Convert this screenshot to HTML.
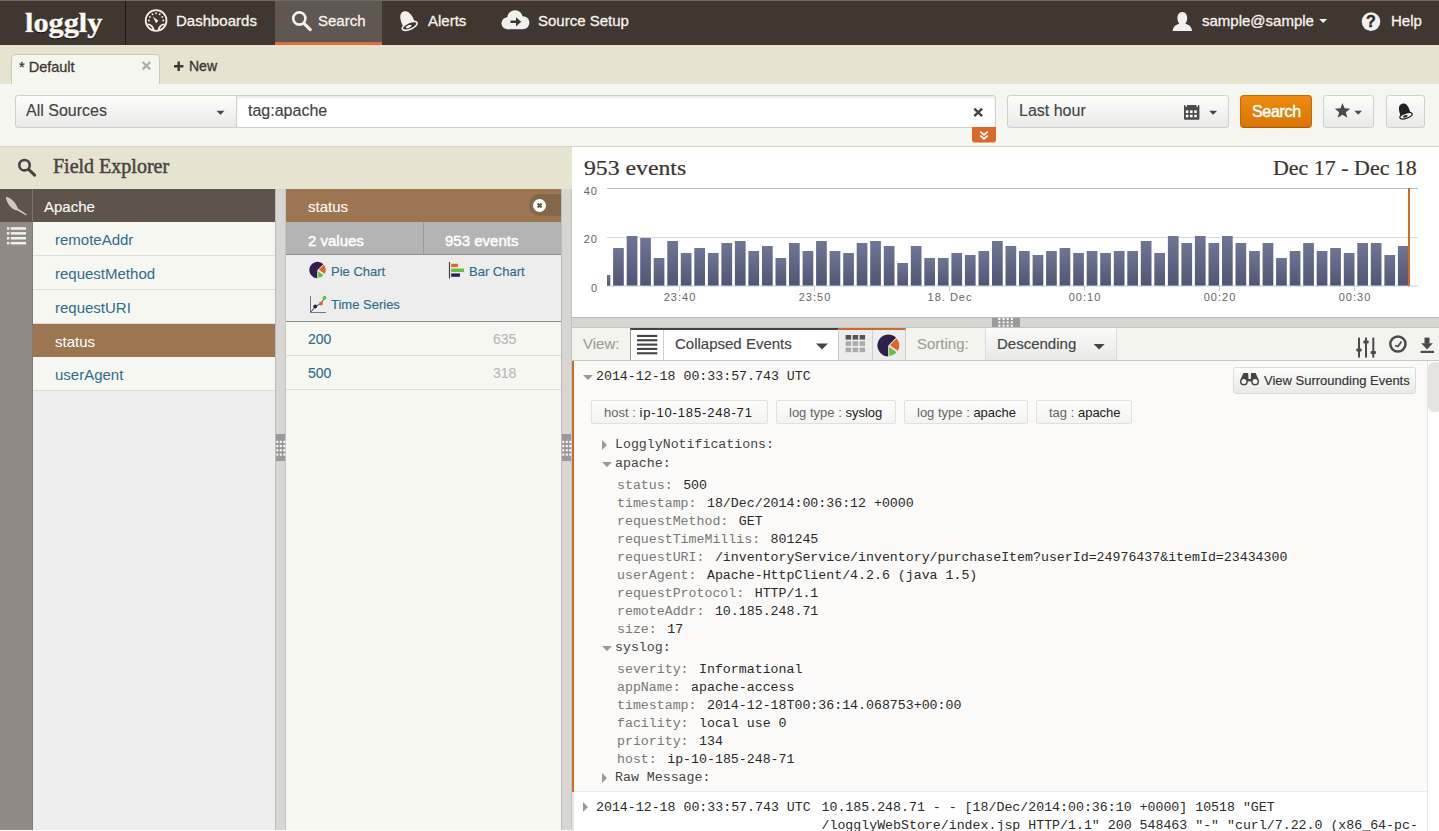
<!DOCTYPE html>
<html><head><meta charset="utf-8">
<style>
*{box-sizing:border-box;margin:0;padding:0}
html,body{width:1439px;height:831px;overflow:hidden;background:#fbfaf8}
body{font-family:"Liberation Sans",sans-serif;position:relative}
.a{position:absolute}
.t{position:absolute;white-space:pre;line-height:1;-webkit-text-stroke-width:0.15px}
svg{position:absolute;overflow:visible}
/* nav */
#nav{left:0;top:0;width:1439px;height:45px;background:#413731;border-top:1px solid #6f6a66}
.nt{color:#f7f3ec;font-size:15px;top:13px;-webkit-text-stroke:0.3px #f7f3ec}
/* tabbar */
#tabbar{left:0;top:45px;width:1439px;height:39px;background:#e6e4d1}
#tab{left:11px;top:54px;width:149px;height:31px;background:#f6f6f1;border:1px solid #cbc9b8;border-bottom:none;border-radius:5px 5px 0 0}
/* search row */
#srow{left:0;top:84px;width:1439px;height:63px;background:#f6f6f1;border-bottom:1px solid #d6d4c9}
.btn{position:absolute;border:1px solid #d0d0cc;border-radius:3px;background:linear-gradient(#fdfdfc,#e9e9e7)}
/* field explorer */
#fehead{left:0;top:147px;width:572px;height:42px;background:#e6e4d1}
#strip{left:0;top:189px;width:33px;height:642px;background:#8f8a85;border-right:1px solid #7f7a75}
#striptop{left:0;top:189px;width:33px;height:33px;background:#5d544e;border-right:1px solid #7a716b}
#col1{left:33px;top:189px;width:242px;height:642px;background:#eeeeee}
.hdr{position:absolute;height:33px;color:#fbf8f2;font-size:15px;-webkit-text-stroke:0.25px #fbf8f2}
.frow{position:absolute;left:0;width:242px;height:34px;background:#f7f7f2;border-bottom:1px solid #dfddd5;font-size:15px;color:#2e6c8c}
.frow span{position:absolute;left:22px;top:10px;line-height:1}
.split{position:absolute;top:189px;width:11px;height:642px;background:#d8d6d2;border-left:1px solid #bdbbb7;border-right:1px solid #c6c4c0}
.handle{position:absolute;left:0;width:9px;height:27px;background:#9a9a9a}
.dot{position:absolute;width:2px;height:2px;background:#fff}
#col2{left:286px;top:189px;width:275px;height:642px;background:#f7f7f2}
.vrow{position:absolute;left:0;width:275px;height:34px;border-bottom:1px solid #dfddd5}
.lnk{color:#2e6c8c;font-size:13px}
/* right */
#chart{left:572px;top:147px;width:867px;height:171px;background:#fff}
#hsplit{left:572px;top:317px;width:867px;height:11px;background:#d8d6d2;border-top:1px solid #bdbbb7;border-bottom:1px solid #c6c4c0}
#tool{left:572px;top:328px;width:867px;height:33px;background:#f4f4ef;border-bottom:1px solid #c9c7c0}
#events{left:572px;top:361px;width:867px;height:470px;background:#fbfaf8}
.mono{font-family:"Liberation Mono",monospace;font-size:13.25px;line-height:1;white-space:pre;position:absolute}
.k{color:#777}
.v{color:#2a2a2a}
.tag{position:absolute;top:400px;height:24px;border:1px solid #e2e1dc;border-radius:2px;background:linear-gradient(#fdfdfc,#f3f3f1);font-size:13px;color:#666;white-space:pre}
.tag span{position:absolute;top:5px;left:12px;line-height:1}
.tag b{font-weight:normal;color:#222}
</style></head><body>

<!-- NAV -->
<div id="nav" class="a"></div>
<div class="t" style="left:25px;top:9px;font-family:'Liberation Serif',serif;font-weight:bold;font-size:28px;color:#fbf8f2;text-shadow:0 1px 1px #000;transform:scaleX(1.08);transform-origin:0 0;-webkit-text-stroke:0.4px #fbf8f2">loggly</div>
<div class="a" style="left:125px;top:1px;width:1px;height:44px;background:#1d1714"></div>
<div class="a" style="left:275px;top:1px;width:107px;height:44px;background:#5f5751;border-bottom:3px solid #d9703f"></div>
<div class="t nt" style="left:176px">Dashboards</div>
<div class="t nt" style="left:318px">Search</div>
<div class="t nt" style="left:428px">Alerts</div>
<div class="t nt" style="left:538px">Source Setup</div>
<div class="t nt" style="left:1202px">sample@sample</div>
<div class="t nt" style="left:1391px">Help</div>

<!-- TABBAR -->
<div id="tabbar" class="a"></div>
<div id="tab" class="a"></div>
<div class="t" style="left:19px;top:60px;font-size:14.5px;color:#3d3632;-webkit-text-stroke:0.3px #3d3632">* Default</div>
<svg style="left:0;top:0" width="200" height="100"><path d="M142.6 62 L150.2 69.4 M150.2 62 L142.6 69.4" stroke="#adadad" stroke-width="2.3"/><path d="M178.7 61.5 V71 M174 66.2 H183.4" stroke="#3d3632" stroke-width="2.4"/></svg>

<div class="t" style="left:189px;top:59px;font-size:14px;color:#3d3632;-webkit-text-stroke:0.35px #3d3632">New</div>

<!-- SEARCH ROW -->
<div id="srow" class="a"></div>
<div class="btn" style="left:15px;top:95px;width:222px;height:33px;border-radius:3px 0 0 3px"></div>
<div class="t" style="left:26px;top:103px;font-size:16px;color:#444">All Sources</div>
<div class="a" style="left:236px;top:95px;width:760px;height:33px;background:#fff;border:1px solid #cfcfcb;box-shadow:inset 0 2px 2px rgba(0,0,0,.08);border-radius:0 3px 3px 0"></div>
<div class="t" style="left:248px;top:103px;font-size:16px;color:#444">tag:apache</div>
<div class="btn" style="left:1007px;top:95px;width:222px;height:33px"></div>
<div class="t" style="left:1019px;top:103px;font-size:16px;color:#444">Last hour</div>
<div class="a" style="left:1240px;top:95px;width:72px;height:33px;border-radius:4px;background:linear-gradient(#ee8a0c,#db7504);border:1px solid #c26a06;border-bottom-color:#a85a04"></div>
<div class="t" style="left:1252px;top:104px;font-size:16px;color:#fff;-webkit-text-stroke:0.5px #fff;letter-spacing:-0.3px">Search</div>
<div class="btn" style="left:1323px;top:95px;width:51px;height:33px"></div>
<div class="btn" style="left:1386px;top:95px;width:39px;height:33px"></div>


<!-- FIELD EXPLORER -->
<div id="fehead" class="a"></div>
<div class="t" style="left:53px;top:156px;font-family:'Liberation Serif',serif;font-size:20px;color:#4a4541;-webkit-text-stroke:0.5px #4a4541">Field Explorer</div>
<div id="strip" class="a"></div>
<div id="striptop" class="a"></div>
<div id="col1" class="a">
  <div class="hdr" style="left:0;top:0;width:242px;background:#5d544e"><span class="t" style="left:11px;top:10px">Apache</span></div>
  <div class="frow" style="top:33px"><span>remoteAddr</span></div>
  <div class="frow" style="top:67px"><span>requestMethod</span></div>
  <div class="frow" style="top:101px"><span>requestURI</span></div>
  <div class="frow" style="top:135px;height:33px;background:#9b7650;color:#fff;border-bottom:none"><span>status</span></div>
  <div class="frow" style="top:168px"><span>userAgent</span></div>
</div>
<div class="split" style="left:275px"><div class="handle" style="top:245px"></div></div>
<div id="col2" class="a">
  <div class="hdr" style="left:0;top:0;width:275px;background:#9b7650"><span class="t" style="left:22px;top:10px">status</span></div>
  <div class="a" style="left:243px;top:5px;width:32px;height:22px;background:#84674a;border-radius:11px 0 0 11px"></div>
  <div class="a" style="left:247px;top:10px;width:13px;height:13px;border-radius:50%;background:#fff"></div>
  <div class="a" style="left:0;top:33px;width:275px;height:33px;background:#b4b4b4;border-bottom:1px solid #8f8f8f"></div>
  <div class="a" style="left:137px;top:33px;width:1px;height:32px;background:#9a9a9a"></div>
  <div class="t" style="left:22px;top:44px;color:#fff;font-size:15px;-webkit-text-stroke:0.45px #fff">2 values</div>
  <div class="t" style="left:159px;top:44px;color:#fff;font-size:15px;-webkit-text-stroke:0.45px #fff">953 events</div>
  <div class="a" style="left:0;top:66px;width:275px;height:67px;background:#ededed;border-bottom:1px solid #8c8c8c"></div>
  <div class="t lnk" style="left:45px;top:76px">Pie Chart</div>
  <div class="t lnk" style="left:183px;top:76px">Bar Chart</div>
  <div class="t lnk" style="left:45px;top:108.5px">Time Series</div>
  <div class="vrow" style="top:133px"><span class="t" style="left:22px;top:10px;font-size:14px;color:#2e6c8c">200</span><span class="t" style="left:207px;top:10px;font-size:14px;color:#b9b9b9">635</span></div>
  <div class="vrow" style="top:167px"><span class="t" style="left:22px;top:10px;font-size:14px;color:#2e6c8c">500</span><span class="t" style="left:207px;top:10px;font-size:14px;color:#b9b9b9">318</span></div>
</div>
<div class="split" style="left:561px"><div class="handle" style="top:245px"></div></div>

<!-- CHART -->
<div id="chart" class="a"></div>
<div class="t" style="left:584px;top:158px;font-family:'Liberation Serif',serif;font-size:21px;color:#3b3431;transform:scaleX(1.13);transform-origin:0 0;-webkit-text-stroke:0.2px #3b3431">953 events</div>
<div class="t" style="left:1273px;top:158px;font-family:'Liberation Serif',serif;font-size:21px;color:#3b3431;transform:scaleX(1.045);transform-origin:0 0;-webkit-text-stroke:0.2px #3b3431">Dec 17 - Dec 18</div>
<svg class="a" style="left:0;top:0" width="1439" height="831">
  <defs><linearGradient id="bg" x1="0" y1="0" x2="0" y2="1"><stop offset="0" stop-color="#6f7695"/><stop offset="1" stop-color="#4f5572"/></linearGradient></defs>
  <rect x="607" y="188" width="811" height="1" fill="#c0c0c0"/>
  <rect x="607" y="237" width="811" height="1" fill="#d8d8d8"/>
  <g fill="url(#bg)"><rect x="607.0" y="275" width="3.3" height="11"/><rect x="613.1" y="248" width="10.7" height="38"/><rect x="626.7" y="236" width="10.7" height="50"/><rect x="640.2" y="238" width="10.7" height="48"/><rect x="653.7" y="258" width="10.7" height="28"/><rect x="667.3" y="241" width="10.7" height="45"/><rect x="680.8" y="253" width="10.7" height="33"/><rect x="694.3" y="248" width="10.7" height="38"/><rect x="707.9" y="253" width="10.7" height="33"/><rect x="721.4" y="243" width="10.7" height="43"/><rect x="734.9" y="241" width="10.7" height="45"/><rect x="748.4" y="251" width="10.7" height="35"/><rect x="762.0" y="246" width="10.7" height="40"/><rect x="775.5" y="258" width="10.7" height="28"/><rect x="789.0" y="243" width="10.7" height="43"/><rect x="802.6" y="251" width="10.7" height="35"/><rect x="816.1" y="241" width="10.7" height="45"/><rect x="829.6" y="251" width="10.7" height="35"/><rect x="843.2" y="253" width="10.7" height="33"/><rect x="856.7" y="243" width="10.7" height="43"/><rect x="870.2" y="241" width="10.7" height="45"/><rect x="883.8" y="246" width="10.7" height="40"/><rect x="897.3" y="263" width="10.7" height="23"/><rect x="910.8" y="246" width="10.7" height="40"/><rect x="924.3" y="258" width="10.7" height="28"/><rect x="937.9" y="258" width="10.7" height="28"/><rect x="951.4" y="253" width="10.7" height="33"/><rect x="964.9" y="255" width="10.7" height="31"/><rect x="978.5" y="251" width="10.7" height="35"/><rect x="992.0" y="241" width="10.7" height="45"/><rect x="1005.5" y="246" width="10.7" height="40"/><rect x="1019.0" y="251" width="10.7" height="35"/><rect x="1032.6" y="255" width="10.7" height="31"/><rect x="1046.1" y="251" width="10.7" height="35"/><rect x="1059.6" y="248" width="10.7" height="38"/><rect x="1073.2" y="253" width="10.7" height="33"/><rect x="1086.7" y="251" width="10.7" height="35"/><rect x="1100.2" y="253" width="10.7" height="33"/><rect x="1113.8" y="251" width="10.7" height="35"/><rect x="1127.3" y="251" width="10.7" height="35"/><rect x="1140.8" y="241" width="10.7" height="45"/><rect x="1154.3" y="253" width="10.7" height="33"/><rect x="1167.9" y="236" width="10.7" height="50"/><rect x="1181.4" y="243" width="10.7" height="43"/><rect x="1194.9" y="236" width="10.7" height="50"/><rect x="1208.5" y="243" width="10.7" height="43"/><rect x="1222.0" y="236" width="10.7" height="50"/><rect x="1235.5" y="243" width="10.7" height="43"/><rect x="1249.1" y="251" width="10.7" height="35"/><rect x="1262.6" y="243" width="10.7" height="43"/><rect x="1276.1" y="258" width="10.7" height="28"/><rect x="1289.7" y="251" width="10.7" height="35"/><rect x="1303.2" y="243" width="10.7" height="43"/><rect x="1316.7" y="251" width="10.7" height="35"/><rect x="1330.2" y="248" width="10.7" height="38"/><rect x="1343.8" y="253" width="10.7" height="33"/><rect x="1357.3" y="243" width="10.7" height="43"/><rect x="1370.8" y="243" width="10.7" height="43"/><rect x="1384.4" y="255" width="10.7" height="31"/><rect x="1397.9" y="246" width="10.7" height="40"/></g>
  <rect x="607" y="285.5" width="811" height="1" fill="#c0d0e0"/>
  <rect x="679" y="286" width="1" height="5" fill="#c0d0e0"/>
  <rect x="814" y="286" width="1" height="5" fill="#c0d0e0"/>
  <rect x="949" y="286" width="1" height="5" fill="#c0d0e0"/>
  <rect x="1084" y="286" width="1" height="5" fill="#c0d0e0"/>
  <rect x="1219" y="286" width="1" height="5" fill="#c0d0e0"/>
  <rect x="1354" y="286" width="1" height="5" fill="#c0d0e0"/>
  <rect x="1408" y="188" width="2" height="98" fill="#d2692a"/>
  <g font-family="Liberation Sans" font-size="11" fill="#666" letter-spacing="1">
    <text x="598" y="195" text-anchor="end">40</text>
    <text x="598" y="243" text-anchor="end">20</text>
    <text x="598" y="292" text-anchor="end">0</text>
    <text x="680" y="301" text-anchor="middle">23:40</text>
    <text x="815" y="301" text-anchor="middle">23:50</text>
    <text x="950" y="301" text-anchor="middle">18. Dec</text>
    <text x="1085" y="301" text-anchor="middle">00:10</text>
    <text x="1220" y="301" text-anchor="middle">00:20</text>
    <text x="1355" y="301" text-anchor="middle">00:30</text>
  </g>
</svg>
<div id="hsplit" class="a"><div class="a" style="left:420px;top:0;width:28px;height:9px;background:#9a9a9a"></div></div>

<!-- TOOLBAR -->
<div id="tool" class="a"></div>
<div class="t" style="left:583px;top:336px;font-size:15px;color:#a19f97">View:</div>
<div class="a" style="left:630px;top:328px;width:209px;height:32px;background:#fff;border-top:2px solid #444;border-left:1px solid #9a9a9a;border-right:1px solid #c8c8c8"></div>
<div class="a" style="left:663px;top:330px;width:1px;height:30px;background:#d0d0d0"></div>
<div class="t" style="left:675px;top:336px;font-size:15px;color:#444">Collapsed Events</div>
<div class="a" style="left:839px;top:328px;width:67px;height:32px;background:#ededed;border-top:2px solid #d2692a;border-right:1px solid #c8c8c8"></div>
<div class="a" style="left:872px;top:330px;width:1px;height:30px;background:#cfcfcf"></div>
<div class="t" style="left:917px;top:336px;font-size:15px;color:#a19f97">Sorting:</div>
<div class="btn" style="left:985px;top:328px;width:132px;height:32px;border:none;border-left:1px solid #ddd;border-right:1px solid #ddd;border-radius:0;background:linear-gradient(#fbfbfa,#e8e8e6)"></div>
<div class="t" style="left:997px;top:336px;font-size:15px;color:#444">Descending</div>

<!-- EVENTS -->
<div id="events" class="a"></div>
<div class="a" style="left:572px;top:361px;width:2px;height:431px;background:#d2692a"></div>
<div class="a" style="left:574px;top:791px;width:853px;height:1px;background:#e9e8e4"></div>
<div class="a" style="left:574px;top:792px;width:853px;height:39px;background:#fff"></div>
<div class="a" style="left:572px;top:792px;width:2px;height:39px;background:#e4e4e4"></div>
<div class="a" style="left:1427px;top:361px;width:12px;height:470px;background:#fff;border-left:1px solid #e6e6e6"></div>
<div class="a" style="left:1428px;top:362px;width:14px;height:50px;background:#e6e4e0;border-radius:6px"></div>
<div class="mono v" style="left:596px;top:370px">2014-12-18 00:33:57.743 UTC</div>
<div class="btn" style="left:1233px;top:367px;width:183px;height:27px;border-color:#dcdcd8"></div>
<div class="t" style="left:1264px;top:374px;font-size:13px;color:#333">View Surrounding Events</div>
<div class="tag" style="left:591px;width:177px"><span>host : <b style="letter-spacing:0.85px">ip-10-185-248-71</b></span></div>
<div class="tag" style="left:776px;width:120px"><span>log type : <b>syslog</b></span></div>
<div class="tag" style="left:904px;width:124px"><span>log type : <b>apache</b></span></div>
<div class="tag" style="left:1036px;width:96px"><span>tag : <b>apache</b></span></div>


<!-- TREE -->
<div class="mono" style="left:615px;top:438px;color:#444">LogglyNotifications:</div>
<svg style="left:602px;top:440px" width="6" height="10"><path d="M0 0L5 5L0 10Z" fill="#999"/></svg>
<div class="mono" style="left:615px;top:457px;color:#444">apache:</div>
<svg style="left:602px;top:462px" width="10" height="6"><path d="M0 0L10 0L5 5Z" fill="#999"/></svg>
<div class="mono" style="left:617px;top:478.5px"><span class="k">status:</span> <span class="v" style="margin-left:2.5px">500</span></div>
<div class="mono" style="left:617px;top:496.5px"><span class="k">timestamp:</span> <span class="v" style="margin-left:2.5px">18/Dec/2014:00:36:12 +0000</span></div>
<div class="mono" style="left:617px;top:514.5px"><span class="k">requestMethod:</span> <span class="v" style="margin-left:2.5px">GET</span></div>
<div class="mono" style="left:617px;top:532.5px"><span class="k">requestTimeMillis:</span> <span class="v" style="margin-left:2.5px">801245</span></div>
<div class="mono" style="left:617px;top:550.5px"><span class="k">requestURI:</span> <span class="v" style="margin-left:2.5px">/inventoryService/inventory/purchaseItem?userId=24976437&amp;itemId=23434300</span></div>
<div class="mono" style="left:617px;top:568.5px"><span class="k">userAgent:</span> <span class="v" style="margin-left:2.5px">Apache-HttpClient/4.2.6 (java 1.5)</span></div>
<div class="mono" style="left:617px;top:586.5px"><span class="k">requestProtocol:</span> <span class="v" style="margin-left:2.5px">HTTP/1.1</span></div>
<div class="mono" style="left:617px;top:604.5px"><span class="k">remoteAddr:</span> <span class="v" style="margin-left:2.5px">10.185.248.71</span></div>
<div class="mono" style="left:617px;top:622.5px"><span class="k">size:</span> <span class="v" style="margin-left:2.5px">17</span></div>
<div class="mono" style="left:615px;top:641px;color:#444">syslog:</div>
<svg style="left:602px;top:646px" width="10" height="6"><path d="M0 0L10 0L5 5Z" fill="#999"/></svg>
<div class="mono" style="left:617px;top:662.5px"><span class="k">severity:</span> <span class="v" style="margin-left:2.5px">Informational</span></div>
<div class="mono" style="left:617px;top:680.5px"><span class="k">appName:</span> <span class="v" style="margin-left:2.5px">apache-access</span></div>
<div class="mono" style="left:617px;top:698.5px"><span class="k">timestamp:</span> <span class="v" style="margin-left:2.5px">2014-12-18T00:36:14.068753+00:00</span></div>
<div class="mono" style="left:617px;top:716.5px"><span class="k">facility:</span> <span class="v" style="margin-left:2.5px">local use 0</span></div>
<div class="mono" style="left:617px;top:734.5px"><span class="k">priority:</span> <span class="v" style="margin-left:2.5px">134</span></div>
<div class="mono" style="left:617px;top:752.5px"><span class="k">host:</span> <span class="v" style="margin-left:2.5px">ip-10-185-248-71</span></div>
<div class="mono" style="left:615px;top:770.5px;color:#444">Raw Message:</div>
<svg style="left:602px;top:772.5px" width="6" height="10"><path d="M0 0L5 5L0 10Z" fill="#999"/></svg>
<svg style="left:583px;top:375px" width="10" height="6"><path d="M0 0L10 0L5 5Z" fill="#999"/></svg>
<svg style="left:583px;top:801.5px" width="6" height="10"><path d="M0 0L5 5L0 10Z" fill="#999"/></svg>
<div class="mono v" style="left:596px;top:801px">2014-12-18 00:33:57.743 UTC</div>
<div class="mono v" style="left:821.5px;top:798.6px;line-height:18px">10.185.248.71 - - [18/Dec/2014:00:36:10 +0000] 10518 "GET
/logglyWebStore/index.jsp HTTP/1.1" 200 548463 "-" "curl/7.22.0 (x86_64-pc-</div>


<div class="a" style="left:0;top:830px;width:572px;height:1px;background:#fff"></div>
<!-- ICONS -->
<svg class="a" style="left:0;top:0;pointer-events:none" width="1439" height="831"><g fill="none" stroke="#f3efe8" stroke-width="1.8"><circle cx="156.1" cy="20.5" r="10.4"/><path d="M147.6 24.4 A5.8 5.8 0 0 1 153.4 30.4" /><path d="M164.6 24.4 A5.8 5.8 0 0 0 158.8 30.4"/></g><g fill="#f3efe8"><circle cx="148.90" cy="20.50" r="0.95"/><circle cx="149.86" cy="16.90" r="0.95"/><circle cx="152.50" cy="14.26" r="0.95"/><circle cx="156.10" cy="13.30" r="0.95"/><circle cx="159.70" cy="14.26" r="0.95"/><circle cx="162.34" cy="16.90" r="0.95"/><circle cx="163.30" cy="20.50" r="0.95"/><path d="M152.9 16.4 L158.4 20.8 L156 23.2 Z"/></g>
<g stroke="#f5f2ee" fill="none"><circle cx="299.3" cy="18.5" r="6.1" stroke-width="2.6"/><path d="M304.2 23.6 L310.2 29.6" stroke-width="3.2" stroke-linecap="round"/></g>
<g transform="translate(-0.8 -0.8) rotate(-24 408 21)"><path d="M401.8 26.5 C401.6 21.5 401.5 17.5 403.5 14.2 C404.6 12.4 406.5 11.6 408 11.6 C409.5 11.6 411.4 12.4 412.5 14.2 C414.5 17.5 414.4 21.5 414.2 26.5 Z" fill="#f3f1ee"/><ellipse cx="408" cy="27.2" rx="8" ry="3.4" fill="#3e3531" stroke="#f3f1ee" stroke-width="1.6"/><ellipse cx="406.8" cy="27.4" rx="3" ry="1.3" fill="#f3f1ee"/></g>
<g fill="#efefee"><circle cx="507.5" cy="23.2" r="6"/><circle cx="515" cy="18" r="7.8"/><circle cx="523" cy="22.6" r="6.4"/><rect x="507.5" y="21" width="15.5" height="8.2"/></g><path d="M510.5 20.6 H516 V17.2 L521.2 21.8 L516 26.4 V23 H510.5 Z" fill="#3e3531"/>
<path fill="#f1f0ee" d="M1182.3 12 C1185.5 12 1187.2 14.8 1187.2 18 C1187.2 20.6 1186.3 22.4 1185.3 23.8 C1189.8 25 1191.8 27.4 1192 31 H1172.7 C1172.9 27.4 1174.9 25 1179.3 23.8 C1178.3 22.4 1177.4 20.6 1177.4 18 C1177.4 14.8 1179.1 12 1182.3 12 Z"/>
<path d="M1319.2 19 L1327.2 19 L1323.2 23 Z" fill="#f1f0ee"/>
<circle cx="1371" cy="21.6" r="9.3" fill="#f1f0ee"/><text x="1371" y="27.4" text-anchor="middle" font-family="Liberation Sans" font-weight="bold" font-size="16" fill="#2e2723" stroke="#2e2723" stroke-width="0.4">?</text>
<path d="M216.5 110.8 L224.5 110.8 L220.5 114.8 Z" fill="#444"/>
<g stroke="#444" stroke-width="2.4"><path d="M974.3 108.6 L982.1 116.1 M982.1 108.6 L974.3 116.1"/></g>
<path d="M972 127 H996 V139.5 Q996 142.5 993 142.5 H975 Q972 142.5 972 139.5 Z" fill="#d8692a"/><g fill="none" stroke="#fff" stroke-width="1.7"><path d="M980.3 131.6 L984 134.8 L987.7 131.6 M980.3 135.6 L984 138.8 L987.7 135.6"/></g>
<g fill="#4a4a4a"><rect x="1184" y="105" width="15.4" height="14.8" rx="0.8"/></g><g fill="#fff"><rect x="1185.4" y="104" width="1.6" height="2.6"/><rect x="1196.4" y="104" width="1.6" height="2.6"/><rect x="1185.8" y="110.4" width="2.6" height="2.6"/><rect x="1185.8" y="114.7" width="2.6" height="2.6"/><rect x="1190.0" y="110.4" width="2.6" height="2.6"/><rect x="1190.0" y="114.7" width="2.6" height="2.6"/><rect x="1194.2" y="110.4" width="2.6" height="2.6"/><rect x="1194.2" y="114.7" width="2.6" height="2.6"/></g>
<path d="M1209.1 110.8 L1217.1 110.8 L1213.1 114.8 Z" fill="#444"/>
<polygon points="1342.50,103.00 1344.56,108.37 1350.30,108.67 1345.83,112.28 1347.32,117.83 1342.50,114.70 1337.68,117.83 1339.17,112.28 1334.70,108.67 1340.44,108.37" fill="#4a4a4a"/>
<path d="M1354.4 110.7 L1362 110.7 L1358.2 114.7 Z" fill="#4a4a4a"/>
<g transform="translate(-1.6 -1.2) rotate(-18 1406 112)"><path d="M1400.8 116.8 C1400.8 112.6 1400.6 109.4 1402.2 106.6 C1403.1 105.1 1404.6 104.6 1406 104.6 C1407.4 104.6 1408.9 105.1 1409.8 106.6 C1411.4 109.4 1411.2 112.6 1411.2 116.8 Z" fill="#222"/><ellipse cx="1406" cy="117.2" rx="6.4" ry="2.6" fill="#f4f4f2" stroke="#222" stroke-width="1.3"/><ellipse cx="1405.2" cy="117.4" rx="2.4" ry="1" fill="#222"/></g>
<g stroke="#474340" fill="none"><circle cx="24.5" cy="165.2" r="5.2" stroke-width="2.6"/><path d="M28.6 169.4 L34.6 175.2" stroke-width="3" stroke-linecap="round"/></g>
<path d="M5.8 196.8 C10.5 197.5 15.5 202 18 208.6 L26.8 214.6 L26.2 215.6 L17.4 210.6 C11.2 209.8 6.6 203.5 5.8 196.8 Z" fill="#cdcac6"/>
<g fill="#f2f1ef"><rect x="6.9" y="227.2" width="2.5" height="2.5"/><rect x="10.8" y="227.2" width="15.2" height="2.5"/><rect x="6.9" y="232.1" width="2.5" height="2.5"/><rect x="10.8" y="232.1" width="15.2" height="2.5"/><rect x="6.9" y="237.0" width="2.5" height="2.5"/><rect x="10.8" y="237.0" width="15.2" height="2.5"/><rect x="6.9" y="241.9" width="2.5" height="2.5"/><rect x="10.8" y="241.9" width="15.2" height="2.5"/></g>
<path d="M317.50 270.00L317.50 278.20A8.2 8.2 0 1 1 323.30 264.20Z" fill="#2e1f4f"/><path d="M318.39 269.87L323.90 264.37A7.789999999999999 7.789999999999999 0 0 1 324.77 274.34Z" fill="#d9692a" stroke="#fff" stroke-width="0.6"/><path d="M317.83 270.62L324.01 274.95A7.544 7.544 0 0 1 317.83 278.16Z" fill="#6bbd45" stroke="#fff" stroke-width="0.6"/>
<rect x="448.9" y="262" width="1.2" height="16.6" fill="#444"/><rect x="451.2" y="263.8" width="6.7" height="3.3" fill="#d9692a"/><rect x="451.2" y="268.5" width="12.8" height="3.5" fill="#6bbd45"/><rect x="451.2" y="273.4" width="8.7" height="3.4" fill="#2e1f4f"/>
<g><path d="M310.5 296 V312.5 H326" fill="none" stroke="#777" stroke-width="1"/><path d="M311 312 L315.2 306.5 L321 303.5 L324.5 297.8" fill="none" stroke="#333" stroke-width="0.9"/><circle cx="315.2" cy="306.5" r="1.9" fill="#2e1f4f"/><circle cx="321" cy="303.5" r="1.9" fill="#d9692a"/><circle cx="324.5" cy="297.8" r="2" fill="#6bbd45"/></g>
<path d="M537.6 203.5 L541.6 207.5 M541.6 203.5 L537.6 207.5" stroke="#6b5238" stroke-width="1.9"/>
<g fill="#444"><rect x="637" y="334.90" width="20.3" height="2.1"/><rect x="637" y="339.23" width="20.3" height="2.1"/><rect x="637" y="343.56" width="20.3" height="2.1"/><rect x="637" y="347.89" width="20.3" height="2.1"/><rect x="637" y="352.22" width="20.3" height="2.1"/></g>
<path d="M816 343.6 L828 343.6 L822 349.6 Z" fill="#444"/>
<rect x="845.6" y="335.0" width="5.5" height="4.6" fill="#555"/><rect x="852.6" y="335.0" width="5.5" height="4.6" fill="#555"/><rect x="859.6" y="335.0" width="5.5" height="4.6" fill="#555"/><rect x="845.6" y="341.3" width="5.5" height="4.6" fill="#aaa"/><rect x="852.6" y="341.3" width="5.5" height="4.6" fill="#aaa"/><rect x="859.6" y="341.3" width="5.5" height="4.6" fill="#aaa"/><rect x="845.6" y="347.6" width="5.5" height="4.6" fill="#aaa"/><rect x="852.6" y="347.6" width="5.5" height="4.6" fill="#aaa"/><rect x="859.6" y="347.6" width="5.5" height="4.6" fill="#aaa"/>
<path d="M888.40 345.50L888.40 356.50A11 11 0 1 1 896.18 337.72Z" fill="#2e1f4f"/><path d="M889.29 345.37L896.68 337.99A10.45 10.45 0 0 1 897.85 351.37Z" fill="#d9692a" stroke="#fff" stroke-width="0.6"/><path d="M888.73 346.12L897.02 351.92A10.120000000000001 10.120000000000001 0 0 1 888.73 356.24Z" fill="#6bbd45" stroke="#fff" stroke-width="0.6"/>
<path d="M1093.6 344 L1104.7 344 L1099.15 349.6 Z" fill="#444"/>
<g fill="#4a4a4a"><rect x="1358" y="337.6" width="2" height="20"/><rect x="1365" y="337.6" width="2" height="20"/><rect x="1372.3" y="337.6" width="2" height="20"/><rect x="1356.3" y="348.5" width="5.4" height="3" rx="1"/><rect x="1363.3" y="340.5" width="5.4" height="3" rx="1"/><rect x="1370.6" y="351" width="5.4" height="3" rx="1"/></g>
<circle cx="1397.9" cy="344" r="7.6" fill="none" stroke="#4a4a4a" stroke-width="2.5"/><path d="M1395 345.5 L1397.9 346.5 L1401.5 341.5" fill="none" stroke="#4a4a4a" stroke-width="1.8"/>
<g fill="#4a4a4a"><rect x="1424.5" y="337.6" width="5" height="6"/><path d="M1421.2 343.2 H1432.8 L1427 349.4 Z"/><rect x="1420.6" y="350.8" width="13.4" height="2.2"/></g>
<g fill="#444"><path d="M1243.5 373 H1248.2 L1248.5 379.5 L1250.8 379.5 L1251 373 H1255.6 L1258.3 379 L1254 381 L1245 381 L1240.7 379 Z"/><rect x="1246" y="379" width="7" height="2.4"/></g><g fill="#f6f6f5" stroke="#444" stroke-width="1.4"><circle cx="1243.9" cy="381.4" r="3.2"/><circle cx="1255.1" cy="381.4" r="3.2"/></g>
<rect x="276.3" y="440.8" width="2" height="2" fill="#fff"/><rect x="279.8" y="440.8" width="2" height="2" fill="#fff"/><rect x="283.3" y="440.8" width="2" height="2" fill="#fff"/><rect x="276.3" y="445.1" width="2" height="2" fill="#fff"/><rect x="279.8" y="445.1" width="2" height="2" fill="#fff"/><rect x="283.3" y="445.1" width="2" height="2" fill="#fff"/><rect x="276.3" y="449.3" width="2" height="2" fill="#fff"/><rect x="279.8" y="449.3" width="2" height="2" fill="#fff"/><rect x="283.3" y="449.3" width="2" height="2" fill="#fff"/><rect x="276.3" y="453.6" width="2" height="2" fill="#fff"/><rect x="279.8" y="453.6" width="2" height="2" fill="#fff"/><rect x="283.3" y="453.6" width="2" height="2" fill="#fff"/><rect x="562.3" y="440.8" width="2" height="2" fill="#fff"/><rect x="565.8" y="440.8" width="2" height="2" fill="#fff"/><rect x="569.3" y="440.8" width="2" height="2" fill="#fff"/><rect x="562.3" y="445.1" width="2" height="2" fill="#fff"/><rect x="565.8" y="445.1" width="2" height="2" fill="#fff"/><rect x="569.3" y="445.1" width="2" height="2" fill="#fff"/><rect x="562.3" y="449.3" width="2" height="2" fill="#fff"/><rect x="565.8" y="449.3" width="2" height="2" fill="#fff"/><rect x="569.3" y="449.3" width="2" height="2" fill="#fff"/><rect x="562.3" y="453.6" width="2" height="2" fill="#fff"/><rect x="565.8" y="453.6" width="2" height="2" fill="#fff"/><rect x="569.3" y="453.6" width="2" height="2" fill="#fff"/><rect x="998.3" y="318.0" width="2.1" height="1.9" fill="#fff"/><rect x="1002.5" y="318.0" width="2.1" height="1.9" fill="#fff"/><rect x="1006.6" y="318.0" width="2.1" height="1.9" fill="#fff"/><rect x="1010.8" y="318.0" width="2.1" height="1.9" fill="#fff"/><rect x="998.3" y="321.4" width="2.1" height="1.9" fill="#fff"/><rect x="1002.5" y="321.4" width="2.1" height="1.9" fill="#fff"/><rect x="1006.6" y="321.4" width="2.1" height="1.9" fill="#fff"/><rect x="1010.8" y="321.4" width="2.1" height="1.9" fill="#fff"/><rect x="998.3" y="324.7" width="2.1" height="1.9" fill="#fff"/><rect x="1002.5" y="324.7" width="2.1" height="1.9" fill="#fff"/><rect x="1006.6" y="324.7" width="2.1" height="1.9" fill="#fff"/><rect x="1010.8" y="324.7" width="2.1" height="1.9" fill="#fff"/></svg>

</body></html>
